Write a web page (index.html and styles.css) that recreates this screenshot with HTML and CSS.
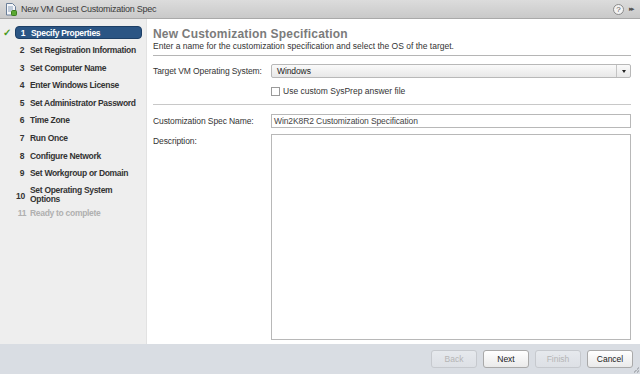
FILE: index.html
```html
<!DOCTYPE html>
<html lang="en">
<head>
  <meta charset="UTF-8">
  <title>New VM Guest Customization Spec</title>
  <link rel="stylesheet" href="styles.css">
</head>
<body>

<div class="titlebar">
  <svg class="title-icon" width="12" height="13" viewBox="0 0 12 13">
    <path d="M1.5 0.5h6l3 3v8.5h-9z" fill="#f4f6f9" stroke="#6b7f99"/>
    <path d="M3 4h5M3 6h5M3 8h3" stroke="#8aa0bb" stroke-width="1"/>
    <rect x="6.5" y="7.5" width="5" height="5" rx="1" fill="#5aa832" stroke="#3d7d20"/>
  </svg>
  <span class="title-text">New VM Guest Customization Spec</span>
  <div class="title-tools">
    <span class="help">?</span>
    <span class="expand">&#9656;&#9656;</span>
  </div>
</div>

<div class="wizard">
  <ul class="steps">
    <li class="done active"><span class="check">&#10003;</span><span class="num">1</span><span>Specify Properties</span></li>
    <li><span class="num">2</span><span>Set Registration Information</span></li>
    <li><span class="num">3</span><span>Set Computer Name</span></li>
    <li><span class="num">4</span><span>Enter Windows License</span></li>
    <li><span class="num">5</span><span>Set Administrator Password</span></li>
    <li><span class="num">6</span><span>Time Zone</span></li>
    <li><span class="num">7</span><span>Run Once</span></li>
    <li><span class="num">8</span><span>Configure Network</span></li>
    <li><span class="num">9</span><span>Set Workgroup or Domain</span></li>
    <li class="two-line"><span class="num">10</span><span>Set Operating System<br>Options</span></li>
    <li class="disabled"><span class="num">11</span><span>Ready to complete</span></li>
  </ul>

  <div class="page">
    <h1>New Customization Specification</h1>
    <p class="subtitle">Enter a name for the customization specification and select the OS of the target.</p>

    <div class="section">
      <div class="row">
        <label>Target VM Operating System:</label>
        <div class="select">
          <span>Windows</span>
          <span class="arrow"><span class="tri"></span></span>
        </div>
      </div>
      <div class="row check-row">
        <label></label>
        <span class="checkbox"></span>
        <span class="check-label">Use custom SysPrep answer file</span>
      </div>
    </div>

    <div class="section fill">
      <div class="row">
        <label>Customization Spec Name:</label>
        <div class="input">Win2K8R2 Customization Specification</div>
      </div>
      <div class="row grow">
        <label>Description:</label>
        <div class="textarea"></div>
      </div>
    </div>
  </div>
</div>

<div class="footer">
  <button class="btn" disabled>Back</button>
  <button class="btn">Next</button>
  <button class="btn" disabled>Finish</button>
  <button class="btn">Cancel</button>
  <span class="grip"></span>
</div>

</body>
</html>
```

FILE: styles.css
```css
* { margin: 0; padding: 0; box-sizing: border-box; }
html, body { height: 100%; }
body {
  font-family: "Liberation Sans", Arial, sans-serif;
  font-size: 8.5px;
  letter-spacing: -0.1px;
  color: #333;
  background: #fff;
  display: flex;
  flex-direction: column;
  overflow: hidden;
}
.titlebar {
  height: 19px;
  flex: none;
  display: flex;
  align-items: center;
  padding: 0 4px 0 5px;
  background: linear-gradient(#dcdcdc, #c9c9c9);
  border-bottom: 1px solid #a9a9a9;
}
.title-icon { margin-right: 4px; }
.title-text {
  font-size: 9px;
  letter-spacing: -0.25px;
  color: #3a3a3a;
}
.title-tools {
  margin-left: auto;
  display: flex;
  align-items: center;
  gap: 5px;
}
.help {
  width: 11px;
  height: 11px;
  border-radius: 50%;
  border: 1px solid #8a8a8a;
  background: #f2f2f2;
  font-size: 8px;
  line-height: 9px;
  text-align: center;
  color: #555;
}
.expand {
  font-size: 7px;
  letter-spacing: -2px;
  color: #555;
  margin-right: 3px;
}
/* wizard */
.wizard {
  flex: 1;
  display: flex;
  min-height: 0;
}
.steps {
  list-style: none;
  width: 147px;
  flex: none;
  background: #eeeeee;
  border-right: 1px solid #e2e2e2;
  padding: 7px 4px 0 0;
}
.steps li {
  position: relative;
  display: flex;
  align-items: center;
  height: 13px;
  margin-bottom: 4.6px;
  margin-left: 15px;
  padding-left: 2px;
  font-weight: bold;
  font-size: 8.5px;
  letter-spacing: -0.3px;
  white-space: nowrap;
  color: #333;
}
.steps .num {
  width: 10px;
  text-align: center;
  margin-right: 3px;
}
.steps li.active {
  background: #2b5584;
  border: 1px solid #1d3f66;
  border-radius: 4px;
  color: #fff;
}
.steps .check {
  position: absolute;
  left: -13px;
  top: 0;
  color: #4a9a1c;
  font-size: 10px;
}
.steps li.two-line {
  height: 21px;
  margin-bottom: 1.5px;
  line-height: 9px;
}
.steps li.two-line .num {
  width: 13px;
  margin-left: -3px;
  margin-right: 3px;
  padding-top: 4px;
}
.steps li.disabled {
  color: #b0b0b0;
}
/* page */
.page {
  flex: 1;
  padding: 8px 9px 4px 6px;
  display: flex;
  flex-direction: column;
}
.page h1 {
  font-size: 12px;
  font-weight: bold;
  color: #7b7b7b;
  letter-spacing: 0.2px;
  line-height: 14px;
}
.subtitle {
  font-size: 8.5px;
  letter-spacing: 0;
  color: #333;
  line-height: 10px;
  padding-bottom: 4px;
  border-bottom: 1px solid #b5b5b5;
}
.section {
  padding: 8px 0 8px;
  border-bottom: 1px solid #c8c8c8;
}
.section.fill {
  flex: 1;
  border-bottom: none;
  padding-top: 9px;
  padding-bottom: 0;
  display: flex;
  flex-direction: column;
}
.row {
  display: flex;
  align-items: flex-start;
}
.row label {
  width: 118px;
  flex: none;
  line-height: 14px;
  white-space: nowrap;
  color: #333;
}
.select {
  flex: 1;
  height: 14px;
  display: flex;
  align-items: center;
  padding-left: 5px;
  border: 1px solid #b8b8b8;
  border-radius: 2px;
  background: linear-gradient(#fafafa, #e8e8e8);
  color: #222;
}
.select .arrow {
  margin-left: auto;
  width: 14px;
  height: 12px;
  border-left: 1px solid #c4c4c4;
  display: flex;
  align-items: center;
  justify-content: center;
}
.tri {
  width: 0;
  height: 0;
  border-left: 2.5px solid transparent;
  border-right: 2.5px solid transparent;
  border-top: 3px solid #222;
}
.check-row {
  margin-top: 8px;
  align-items: center;
}
.checkbox {
  width: 9px;
  height: 9px;
  border: 1px solid #9a9a9a;
  background: #fff;
  margin-right: 3px;
}
.check-label {
  color: #333;
  letter-spacing: 0;
}
.input {
  flex: 1;
  height: 14px;
  line-height: 12px;
  padding-left: 2px;
  border: 1px solid #b8b8b8;
  color: #444;
}
.row.grow {
  flex: 1;
  margin-top: 6px;
}
.textarea {
  flex: 1;
  align-self: stretch;
  border: 1px solid #b8b8b8;
  background: #fff;
}
/* footer */
.footer {
  height: 30px;
  flex: none;
  background: #d9dde3;
  display: flex;
  align-items: center;
  justify-content: flex-end;
  gap: 6px;
  padding-right: 7px;
  position: relative;
}
.btn {
  width: 46px;
  height: 18px;
  font-family: "Liberation Sans", Arial, sans-serif;
  font-size: 8.5px;
  color: #222;
  background: linear-gradient(#ffffff, #eaeaea);
  border: 1px solid #a9a9a9;
  border-radius: 3px;
}
.btn:disabled {
  color: #b5b5b5;
  border-color: #c6c9ce;
  background: linear-gradient(#e6e9ed, #dde0e5);
}
.grip {
  position: absolute;
  right: 1px;
  bottom: 1px;
  width: 6px;
  height: 6px;
  background: linear-gradient(135deg, transparent 50%, #b0b4ba 50%, #b0b4ba 60%, transparent 60%, transparent 75%, #b0b4ba 75%, #b0b4ba 85%, transparent 85%);
}
```
